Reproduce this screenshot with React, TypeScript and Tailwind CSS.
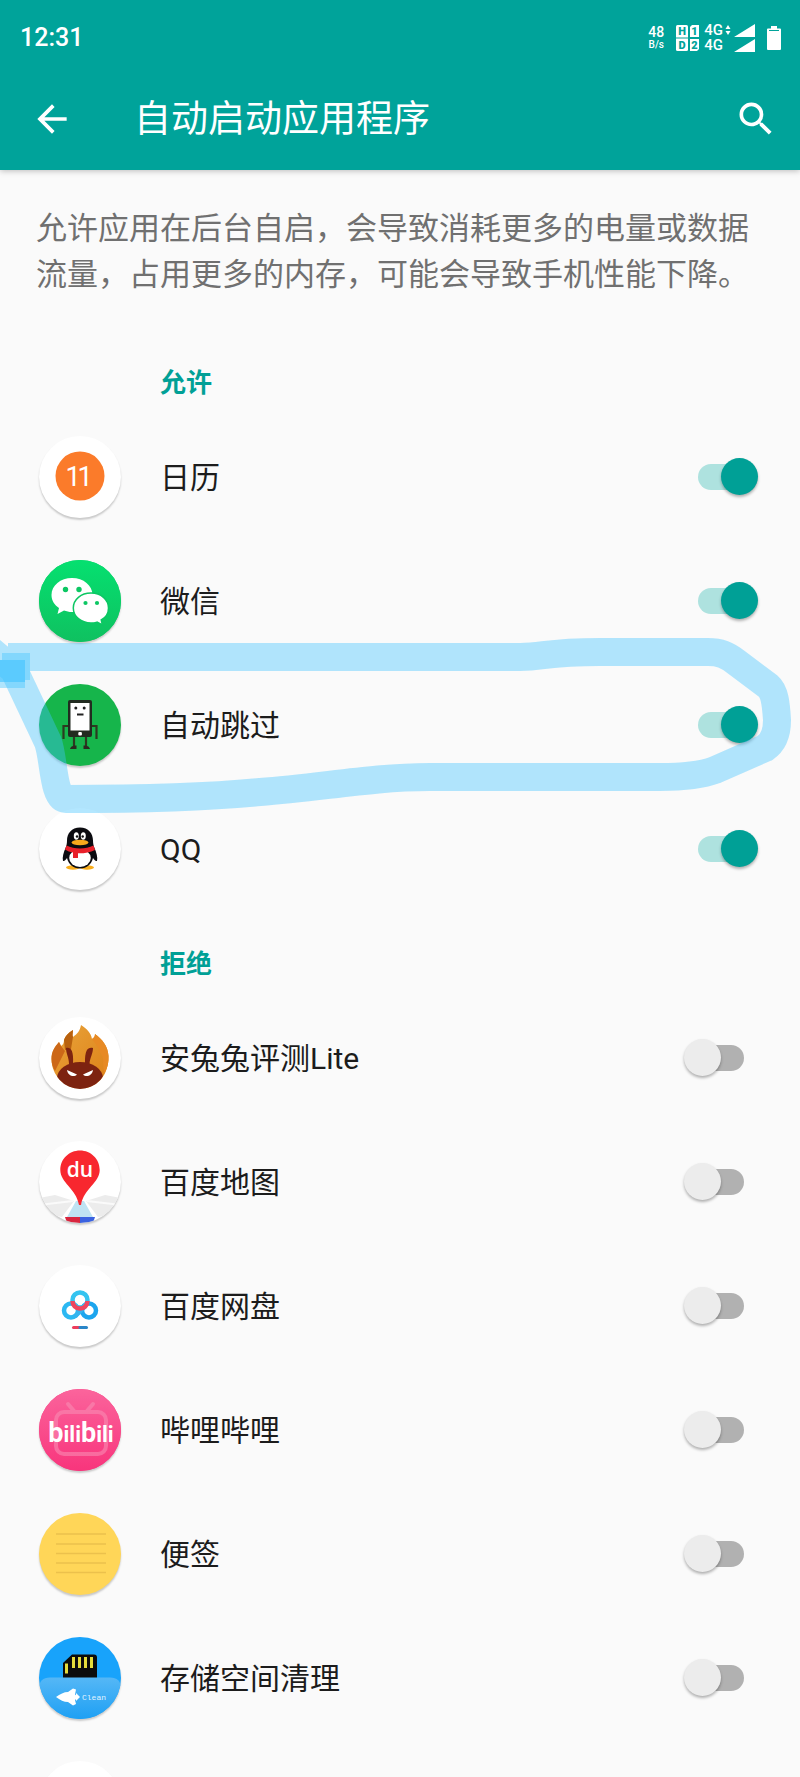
import { useState } from 'react';
import type { ReactNode } from 'react';
import { MdArrowBack, MdSearch } from 'react-icons/md';

type AppItem = {
  id: string;
  name: string;
  bg: string;
  icon: ReactNode;
};

const CalendarIcon = () => (
  <svg viewBox="0 0 82 82" className="size-full">
    <circle cx="41" cy="40" r="24.5" fill="#fb7b2a" />
    <g fontFamily="Roboto" fontSize="27" fill="#fff" textAnchor="middle">
      <text x="34" y="50">1</text>
      <text x="46" y="50">1</text>
    </g>
  </svg>
);

const WechatIcon = () => (
  <svg viewBox="0 0 82 82" className="size-full">
    <defs>
      <linearGradient id="wechat" x1="0" y1="0" x2="0" y2="1">
        <stop offset="0" stopColor="#05e070" />
        <stop offset="1" stopColor="#0fc160" />
      </linearGradient>
    </defs>
    <rect width="82" height="82" fill="url(#wechat)" />
    <path d="M33 18c-11.500 0-20.500 7.500-20.500 17 0 5.500 3 10 7.500 13l-1.500 6 6.500-3.500c2.500.900 5 1.500 8 1.500 11.500 0 20.500-7.500 20.500-17S44.500 18 33 18z" fill="#fff" />
    <circle cx="26.500" cy="29.500" r="2.700" fill="#0cc763" />
    <circle cx="40" cy="29.500" r="2.700" fill="#0cc763" />
    <path d="M52 33c-10 0-17.700 6.500-17.700 15S42 63 52 63c2 0 4.200-.300 6-.900l5.500 2.900-1.300-5C66.800 57.500 69.500 53 69.500 48c0-8.500-7.500-15-17.500-15z" fill="#fff" stroke="#0cc763" strokeWidth="1.500" />
    <circle cx="46.500" cy="43" r="2.100" fill="#0cc763" />
    <circle cx="58" cy="43" r="2.100" fill="#0cc763" />
  </svg>
);

const SkipIcon = () => (
  <svg viewBox="0 0 82 82" className="size-full">
    <rect x="29" y="16" width="24" height="37" rx="2" fill="#222b20" />
    <rect x="31.500" y="19" width="19" height="27.500" fill="#fff" />
    <circle cx="36.800" cy="24" r="1.500" fill="#222" />
    <circle cx="45.200" cy="24" r="1.500" fill="#222" />
    <path d="M38 30.500h6.500" stroke="#222" strokeWidth="2" />
    <rect x="39.300" y="48" width="3.600" height="3.600" rx="1" fill="#fff" />
    <path d="M29 42h-4.500v13M53 42h4.500v13" stroke="#2c3a20" strokeWidth="2.200" fill="none" />
    <path d="M35 53v9M47 53v9" stroke="#2c3a20" strokeWidth="2.200" />
    <path d="M31 65c1-3 3-3.500 6.500-3.500V65zM51 65c-1-3-3-3.500-6.500-3.500V65z" fill="#2c2a20" />
  </svg>
);

const QQIcon = () => (
  <svg viewBox="0 0 82 82" className="size-full">
    <ellipse cx="34" cy="59.500" rx="7" ry="2.200" fill="#f8ad1c" />
    <ellipse cx="48" cy="59.500" rx="7" ry="2.200" fill="#f8ad1c" />
    <path d="M41 19.500c-8.500 0-13 6-13 13 0 3-.500 5-1.500 7.500-1.800 4.500-3.500 9-2.500 13 1.500.500 3-1.500 4-3 1.500 6 6 10.500 13 10.500S52.500 56 54 50c1 1.500 2.500 3.500 4 3 1-4-.700-8.500-2.500-13-1-2.500-1.500-4.500-1.500-7.500 0-7-4.500-13-13-13z" fill="#0b0b10" />
    <ellipse cx="41" cy="50" rx="10.800" ry="9" fill="#fff" />
    <ellipse cx="37.300" cy="28" rx="2.500" ry="3.700" fill="#fff" />
    <ellipse cx="44.300" cy="28" rx="2.500" ry="3.700" fill="#fff" />
    <circle cx="38" cy="28.500" r="1.200" fill="#111" />
    <circle cx="43.700" cy="28.500" r="1.200" fill="#111" />
    <ellipse cx="41" cy="34.500" rx="8.500" ry="2.800" fill="#f8a81c" />
    <path d="M27.500 37.500c8 4 19 4 27 0l1.500 4.500c-5 2.500-11 3.500-17 3.300V50h-5v-5.500c-3-.500-5.500-1.500-8-3z" fill="#e8202a" />
  </svg>
);

const AntutuIcon = () => (
  <svg viewBox="0 0 82 82" className="size-full">
    <defs>
      <linearGradient id="flame" x1="0" y1="0" x2="1" y2="1">
        <stop offset="0" stopColor="#e9a53b" />
        <stop offset="1" stopColor="#dd7f16" />
      </linearGradient>
      <clipPath id="antutu">
        <ellipse cx="41" cy="40" rx="29" ry="32" />
      </clipPath>
    </defs>
    <path d="M12.500 42c0-7 3-12 7.500-17l2 4c2-1 3-3 3-6 1-4 4-7 9-10 0 3-1 5 0 7 4-3 7-6 8-12 6 4 10 8 11 14 2-1 3-3 3-5 7 5 13 12 13.500 22C70 58 58 71.500 41.500 71.500S12.500 58 12.500 42z" fill="url(#flame)" />
    <path d="M12.500 42c0-7 3-12 7.500-17l2 4 4 5-5 10-5 10c-2-3-3.500-7-3.500-12z" fill="#cc6818" />
    <path d="M25 23c1-4 4-7 9-10 0 3-1 5 0 7l-2 12-6 1z" fill="#b8610f" />
    <path d="M56 17c7 5 13 12 13.500 22 .500 6-1 12-4 17-3-8 1-14-4-20-2-6-5-9-8.500-14 2-1 3-3 3-5z" fill="#e78a24" />
    <g clipPath="url(#antutu)" fill="#7d2310">
      <ellipse cx="41" cy="61" rx="23" ry="16" />
    </g>
    <path d="M27 31c4-1 8 1 7 16h-4c0-7-3-10-3-16zM54 31c-4-1-8.500 0-8 16h4.500c.500-7 3.500-10 3.500-16z" fill="#7d2310" />
    <path d="M28 53l10 4.500c-3 3-9 1.500-10-4.500zM54 53l-10 4.500c3 3 9 1.500 10-4.500z" fill="#fff" />
  </svg>
);

const BaiduMapIcon = () => (
  <svg viewBox="0 0 82 82" className="size-full">
    <path d="M0 57l16-3 19 6-12 16-23-4zM82 57l-16-3-19 6 12 16 23-4z" fill="#ececec" />
    <path d="M0 64l34-4M82 64l-34-4" stroke="#fafafa" strokeWidth="2" />
    <path d="M37 60h8l9 16H28z" fill="#bfe3f3" />
    <path d="M26 76h15v6H28z" fill="#d8263f" />
    <path d="M41 76h15l-2 6H41z" fill="#3a62e0" />
    <path d="M41 9.500c-11 0-19.700 8.500-19.700 19.500C21.300 42 37 47 40 64h2c3-17 18.700-22 18.700-35C60.700 18 52 9.500 41 9.500z" fill="#f8272f" />
    <text x="41" y="36" textAnchor="middle" fontFamily="Open Sans" fontWeight="600" fontSize="21" fill="#fff">du</text>
  </svg>
);

const NetdiskIcon = () => (
  <svg viewBox="0 0 82 82" className="size-full" fill="none" strokeWidth="4.500">
    <circle cx="32" cy="45.500" r="7" stroke="#2cb8f2" />
    <circle cx="50" cy="45.500" r="7" stroke="#1ca5ee" />
    <path d="M36 51.500l10-10" stroke="#35b4ee" />
    <circle cx="41" cy="35" r="7.500" stroke="#35c4f0" />
    <path d="M33.500 36a7.500 7.500 0 0 0 15 0" stroke="#f0465f" />
    <path d="M34.500 62.500H41" stroke="#ee3d5c" strokeWidth="3" strokeLinecap="round" />
    <path d="M41 62.500h6.500" stroke="#2a86c8" strokeWidth="3" strokeLinecap="round" />
  </svg>
);

const BilibiliIcon = () => (
  <svg viewBox="0 0 82 82" className="size-full">
    <defs>
      <linearGradient id="bili" x1="0" y1="0" x2="0" y2="1">
        <stop offset="0" stopColor="#fb649c" />
        <stop offset="1" stopColor="#f8357c" />
      </linearGradient>
    </defs>
    <rect width="82" height="82" fill="url(#bili)" />
    <g fill="none" stroke="#f98bb2" strokeWidth="4" opacity="0.600">
      <rect x="17" y="23" width="50" height="42" rx="8" />
      <path d="M29 15l6 7M54 15l-6 7" strokeLinecap="round" />
    </g>
    <text x="42" y="53" textAnchor="middle" fontFamily="Roboto" fontWeight="700" fontSize="22" fill="#fff">
      <tspan fontSize="27">b</tspan>ili<tspan fontSize="27">b</tspan>ili
    </text>
  </svg>
);

const NotesIcon = () => (
  <svg viewBox="0 0 82 82" className="size-full" stroke="#ecc14c" strokeWidth="1.500">
    <path d="M17 21h50M17 31h50M17 40.500h50M17 50h50M17 59.500h50" />
  </svg>
);

const CleanerIcon = () => (
  <svg viewBox="0 0 82 82" className="size-full">
    <defs>
      <linearGradient id="pocket" x1="0" y1="0" x2="0" y2="1">
        <stop offset="0" stopColor="#55b7f6" />
        <stop offset="1" stopColor="#1ea0f4" />
      </linearGradient>
    </defs>
    <path d="M24 42V26l9-8.500h22a3 3 0 0 1 3 3V42z" fill="#0c0c0c" />
    <path d="M27.500 26.500v10M34.500 20v11M40.500 20v11M46.500 20v11M52.500 20v11" stroke="#e6dc3c" strokeWidth="3" />
    <path d="M0 52C0 44 4 40.500 11 40.500h60c7 0 11 3.500 11 11.500v30H0z" fill="url(#pocket)" />
    <path d="M17 60c4-3 8-5 12-5l5-3.500 3 1-1 5 3 2.500-3 3 1 4-3 1.500-5-3.500c-4 0-8-2-12-5z" fill="#fff" />
    <path d="M37 56l4 4-4 4z" fill="#fff" />
    <text x="43" y="63" fontFamily="Liberation Mono" fontSize="8" fill="#e2f3ff">Clean</text>
  </svg>
);

const allowedApps: AppItem[] = [
  { id: 'calendar', name: '日历', bg: 'bg-white', icon: <CalendarIcon /> },
  { id: 'wechat', name: '微信', bg: 'bg-[#0cc763]', icon: <WechatIcon /> },
  { id: 'skip', name: '自动跳过', bg: 'bg-[#16b54b]', icon: <SkipIcon /> },
  { id: 'qq', name: 'QQ', bg: 'bg-white', icon: <QQIcon /> },
];

const deniedApps: AppItem[] = [
  { id: 'antutu', name: '安兔兔评测Lite', bg: 'bg-white', icon: <AntutuIcon /> },
  { id: 'map', name: '百度地图', bg: 'bg-white', icon: <BaiduMapIcon /> },
  { id: 'netdisk', name: '百度网盘', bg: 'bg-white', icon: <NetdiskIcon /> },
  { id: 'bilibili', name: '哔哩哔哩', bg: 'bg-[#f8357c]', icon: <BilibiliIcon /> },
  { id: 'notes', name: '便签', bg: 'bg-[#ffd658]', icon: <NotesIcon /> },
  { id: 'cleaner', name: '存储空间清理', bg: 'bg-[#18a3fb]', icon: <CleanerIcon /> },
  { id: 'other', name: '', bg: 'bg-white', icon: null },
];

function StatusBar() {
  return (
    <div className="flex h-[74px] items-center justify-between pl-5 pr-[19px] pt-[2px] font-medium">
      <span className="text-[25px] leading-7">12:31</span>
      <div className="flex items-center">
        <div className="flex flex-col items-center text-center">
          <span className="text-[14px] leading-[14px]">48</span>
          <span className="text-[10px] leading-3">B/s</span>
        </div>
        <svg viewBox="0 0 23 26" className="ml-3 h-[26px] w-[23px]">
          <rect width="12" height="26" rx="1.500" fill="#fff" />
          <path d="M16 0h7v12h-9V2zM14 14h9v10l-2 2h-7z" fill="#fff" />
          <path d="M0 13h12" stroke="#00a39a" />
          <g fill="#00a39a" fontFamily="Roboto" fontWeight="900" fontSize="11" textAnchor="middle">
            <text x="6" y="10">H</text>
            <text x="18.500" y="10">1</text>
            <text x="6" y="24">D</text>
            <text x="18.500" y="24">2</text>
          </g>
        </svg>
        <div className="ml-[5px] flex flex-col text-[15px] leading-[15px]">
          <span>4G</span>
          <span>4G</span>
        </div>
        <svg viewBox="0 0 30 28" className="ml-[2px] h-7 w-[30px]" fill="#fff">
          <path d="M3 1l2.500 4h-5zM3 11L.5 7h5zM30 0v13H9zM30 15v13H9z" />
        </svg>
        <svg viewBox="0 0 14 24" className="ml-3 h-6 w-[14px]" fill="#fff">
          <path d="M4 0h6v2.500h3a1 1 0 0 1 1 1V23a1 1 0 0 1-1 1H1a1 1 0 0 1-1-1V3.500a1 1 0 0 1 1-1h3z" />
          <path d="M2 4.500h10" stroke="#00a39a" />
        </svg>
      </div>
    </div>
  );
}

function AppRow({ app, defaultOn }: { app: AppItem; defaultOn: boolean }) {
  const [enabled, setEnabled] = useState(defaultOn);

  return (
    <li className="flex h-[124px] items-center pl-[39px] pr-14">
      <div className={`size-[82px] shrink-0 overflow-hidden rounded-full shadow-[0_2px_2px_rgba(0,0,0,0.2)] ${app.bg}`}>
        {app.icon}
      </div>
      <label htmlFor={app.id} className="ml-[39px] flex-1 pt-[2px] text-[30px] leading-10 text-[#1c1c1c]">
        {app.name}
      </label>
      <input
        id={app.id}
        type="checkbox"
        role="switch"
        checked={enabled}
        onChange={() => setEnabled(!enabled)}
        className="relative h-[26px] w-[46px] shrink-0 cursor-pointer appearance-none rounded-full bg-[#b1b1b1] before:absolute before:-left-[14px] before:-top-[6px] before:size-[37px] before:rounded-full before:bg-[#ececec] before:shadow-[0_2px_3px_rgba(0,0,0,0.3)] checked:bg-[#aee2df] checked:before:left-[23px] checked:before:bg-[#00a096]"
      />
    </li>
  );
}

function SectionTitle({ children }: { children: ReactNode }) {
  return (
    <h2 className="flex h-16 items-center pl-40 text-[26px] font-bold leading-9 text-[#00a096]">
      {children}
    </h2>
  );
}

// hand drawn marker loop around the third row
function MarkerLoop() {
  return (
    <svg
      viewBox="0 0 800 200"
      preserveAspectRatio="none"
      className="pointer-events-none absolute left-0 top-[215px] h-[200px] w-full"
    >
      <path
        d="M-10 20L14 40L48 112C54 128 53 169 66 169C130 169 200 168 260 162C320 158 370 147 430 147H660C690 147 707 143 715 140L765 118C774 112 777 102 777 90C776 74 775 62 768 56L736 32C727 25 720 22 708 22H600C545 22 545 27 520 27H8"
        fill="none"
        stroke="#41c3ff"
        strokeOpacity="0.4"
        strokeWidth="28"
        strokeLinejoin="round"
      />
      <path d="M2 23h28v27h-5v8H0V30h2z" fill="#41c3ff" fillOpacity="0.4" />
      <path d="M0 30h25v22H0z" fill="#41c3ff" fillOpacity="0.600" />
    </svg>
  );
}

export default function App() {
  return (
    <div className="flex h-screen flex-col overflow-hidden bg-[#fafafa] font-['Roboto','Noto_Sans_CJK_SC',sans-serif]">
      <header className="z-10 shrink-0 bg-[#00a39a] pb-[6px] text-white shadow-[0_1px_6px_rgba(0,0,0,0.25)]">
        <StatusBar />
        <div className="flex h-[90px] items-center pl-[30px] pr-[22px]">
          <button type="button" aria-label="返回">
            <MdArrowBack className="size-11" />
          </button>
          <h1 className="ml-[60px] flex-1 pt-[2px] text-[37px] leading-[52px]">自动启动应用程序</h1>
          <button type="button" aria-label="搜索">
            <MdSearch className="size-11" />
          </button>
        </div>
      </header>

      <main className="flex-1 overflow-y-auto [scrollbar-width:none]">
        <p className="px-9 pt-9 text-[31px] leading-[46px] text-[#707070]">
          允许应用在后台自启，会导致消耗更多的电量或数据流量，占用更多的内存，可能会导致手机性能下降。
        </p>

        <section className="mt-[53px]">
          <SectionTitle>允许</SectionTitle>
          <div className="relative">
            <ul>
              {allowedApps.map((app) => (
                <AppRow key={app.id} app={app} defaultOn={true} />
              ))}
            </ul>
            <MarkerLoop />
          </div>
        </section>

        <section className="mt-[21px]">
          <SectionTitle>拒绝</SectionTitle>
          <ul>
            {deniedApps.map((app) => (
              <AppRow key={app.id} app={app} defaultOn={false} />
            ))}
          </ul>
        </section>
      </main>
    </div>
  );
}
